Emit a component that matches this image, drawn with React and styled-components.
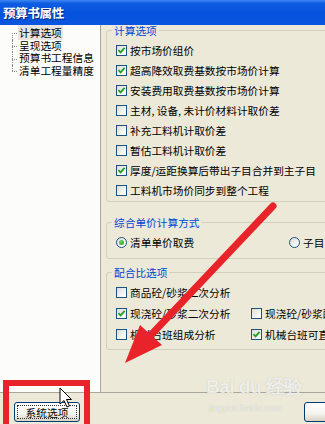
import React from "react";
import styled, { createGlobalStyle } from "styled-components";

const GlobalStyle = createGlobalStyle`
  html, body {
    margin: 0;
    padding: 0;
    background: #ece9d8;
  }
`;

const FONT = `"Noto Sans CJK SC", "Noto Sans", "Liberation Sans", sans-serif`;

const Window = styled.div`
  position: relative;
  width: 325px;
  height: 424px;
  overflow: hidden;
  display: flex;
  flex-direction: column;
  background: #ece9d8;
  font-family: ${FONT};
  font-size: 10.7px;
  color: #000;
`;

const TitleBar = styled.div`
  height: 25px;
  flex-shrink: 0;
  display: flex;
  align-items: center;
  padding-left: 3px;
  background: linear-gradient(#3d86f2 0%, #0d5ce2 14%, #0552dc 55%, #0a56e0 100%);
  color: #fff;
  font-size: 12.5px;
  font-weight: bold;
  letter-spacing: -0.3px;
  text-shadow: 1px 1px 0 #0a2a80;
  position: relative;
  z-index: 2;
`;

const Body = styled.div`
  flex: 1;
  display: flex;
  min-height: 0;
`;

const Tree = styled.ul`
  width: 100px;
  flex-shrink: 0;
  margin: 0;
  padding: 2px 0 0 0;
  list-style: none;
  background: #fcfcfa;
  border-right: 1px solid #a7a69b;
`;

const TreeItem = styled.li`
  position: relative;
  height: 12.7px;
  line-height: 12.7px;
  padding-left: 18px;
  white-space: nowrap;

  &::before {
    content: "";
    position: absolute;
    left: 12px;
    top: ${(p) => (p.$first ? "50%" : "0")};
    bottom: ${(p) => (p.$last ? "50%" : "0")};
    border-left: 1px dotted #8a8a8a;
  }

  &::after {
    content: "";
    position: absolute;
    left: 12px;
    top: 50%;
    width: 5px;
    border-top: 1px dotted #8a8a8a;
  }
`;

const TreeLabel = styled.span`
  padding: 0 1px;
  background: ${(p) => (p.$selected ? "#e6e5df" : "transparent")};
`;

const Panel = styled.div`
  flex: 1;
  min-width: 0;
  overflow: hidden;
  padding-left: 5px;
  margin-top: -0.5px;
`;

const Group = styled.fieldset`
  width: 250px;
  min-width: 0;
  margin: ${(p) => p.$gap || 0}px 0 0 0;
  padding: 0;
  border: 1px solid #d0d0bf;
  border-radius: 3px;
`;

const Legend = styled.legend`
  margin-left: 5px;
  padding: 0 2px;
  line-height: 11px;
  color: #0046d5;
`;

const Rows = styled.div`
  padding: ${(p) => p.$pt || 5}px 0 ${(p) => p.$pb || 0}px 9px;
`;

const Row = styled.div`
  display: flex;
  height: ${(p) => p.$h || 20}px;
  align-items: center;
`;

const Option = styled.label`
  display: flex;
  align-items: center;
  gap: 3px;
  white-space: nowrap;
  flex-shrink: 0;
  width: ${(p) => (p.$w ? `${p.$w}px` : "auto")};
`;

const Box = styled.span`
  width: 11px;
  height: 11px;
  box-sizing: border-box;
  flex-shrink: 0;
  border: 1px solid #1c5180;
  border-radius: ${(p) => (p.$round ? "50%" : "0")};
  background: linear-gradient(135deg, #dcdcd4 0%, #f4f4f0 60%, #fff 100%);
  display: flex;
  align-items: center;
  justify-content: center;
`;

const Dot = styled.span`
  width: 5px;
  height: 5px;
  border-radius: 50%;
  background: radial-gradient(circle at 35% 35%, #6fd46f, #1f9a1f);
`;

const Footer = styled.div`
  height: 32px;
  flex-shrink: 0;
  box-sizing: border-box;
  border-top: 1px solid #a7a69b;
  display: flex;
  align-items: flex-start;
  padding: 9px 0 0 14px;
`;

const Button = styled.button`
  flex-shrink: 0;
  width: ${(p) => p.$w}px;
  height: 20px;
  margin: 0 0 0 ${(p) => p.$ml || 0}px;
  padding: 0;
  border: 1px solid #003c74;
  border-radius: 3px;
  background: linear-gradient(#ffffff 0%, #f4f3ee 60%, #d8d2c4 100%);
  font-family: ${FONT};
  font-size: 10.7px;
  color: #000;
  outline: ${(p) => (p.$focus ? "1px dotted #333" : "none")};
  outline-offset: -4px;
`;

const Overlay = styled.svg`
  position: absolute;
  left: 0;
  top: 0;
  pointer-events: none;
  z-index: 5;
`;

const Watermark = styled.div`
  position: absolute;
  left: 206px;
  top: 376px;
  color: rgba(255, 255, 255, 0.75);
  font-family: "Liberation Sans", sans-serif;
  text-shadow: 0 0 1px rgba(150, 150, 140, 0.6);
  pointer-events: none;
  z-index: 4;
`;

const MarkLogo = styled.div`
  font-size: 19px;
  font-weight: bold;
  line-height: 22px;
  letter-spacing: -0.5px;
`;

const MarkSub = styled.div`
  font-size: 9px;
  line-height: 12px;
  margin-top: 4px;
  padding-left: 3px;
`;

const Check = () => (
  <svg width="9" height="9" viewBox="0 0 9 9">
    <path d="M1.5 4.2 L3.6 6.4 L7.6 1.8" fill="none" stroke="#21a121" strokeWidth="1.8" />
  </svg>
);

const CheckOption = ({ checked, w, children }) => (
  <Option $w={w}>
    <Box>{checked && <Check />}</Box>
    {children}
  </Option>
);

const RadioOption = ({ checked, w, children }) => (
  <Option $w={w}>
    <Box $round>{checked && <Dot />}</Box>
    {children}
  </Option>
);

const treeItems = ["计算选项", "呈现选项", "预算书工程信息", "清单工程量精度"];

const calcOptions = [
  ["按市场价组价", true],
  ["超高降效取费基数按市场价计算", true],
  ["安装费用取费基数按市场价计算", true],
  ["主材, 设备, 未计价材料计取价差", false],
  ["补充工料机计取价差", false],
  ["暂估工料机计取价差", false],
  ["厚度/运距换算后带出子目合并到主子目", true],
  ["工料机市场价同步到整个工程", false],
];

export default function App() {
  return (
    <>
      <GlobalStyle />
      <Window>
        <TitleBar>预算书属性</TitleBar>
        <Body>
          <Tree>
            {treeItems.map((t, i) => (
              <TreeItem key={t} $first={i === 0} $last={i === treeItems.length - 1}>
                <TreeLabel $selected={i === 0}>{t}</TreeLabel>
              </TreeItem>
            ))}
          </Tree>
          <Panel>
            <Group>
              <Legend>计算选项</Legend>
              <Rows $pt={5}>
                {calcOptions.map(([t, c]) => (
                  <Row key={t}>
                    <CheckOption checked={c}>{t}</CheckOption>
                  </Row>
                ))}
              </Rows>
            </Group>
            <Group $gap={15}>
              <Legend>综合单价计算方式</Legend>
              <Rows $pt={4.5} $pb={6}>
                <Row>
                  <RadioOption checked w={173}>清单单价取费</RadioOption>
                  <RadioOption>子目单价取费</RadioOption>
                </Row>
              </Rows>
            </Group>
            <Group $gap={7.5}>
              <Legend>配合比选项</Legend>
              <Rows $pt={4.5} $pb={4}>
                <Row $h={21}>
                  <CheckOption>商品砼/砂浆二次分析</CheckOption>
                </Row>
                <Row $h={21}>
                  <CheckOption checked w={135}>现浇砼/砂浆二次分析</CheckOption>
                  <CheckOption>现浇砼/砂浆配合比</CheckOption>
                </Row>
                <Row $h={21}>
                  <CheckOption w={135}>机械台班组成分析</CheckOption>
                  <CheckOption checked>机械台班可直接修改</CheckOption>
                </Row>
              </Rows>
            </Group>
          </Panel>
        </Body>
        <Footer>
          <Button $w={66} $focus>系统选项</Button>
          <Button $w={70} $ml={224}>确定</Button>
        </Footer>

        <Watermark>
          <MarkLogo>Bai du 经验</MarkLogo>
          <MarkSub>jingyan.baidu.com</MarkSub>
        </Watermark>

        <Overlay width="325" height="424" viewBox="0 0 325 424">
          <rect x="6" y="383" width="81" height="52" fill="none" stroke="#e8242a" strokeWidth="6" />
          <line x1="273" y1="206" x2="150" y2="336" stroke="#e8242a" strokeWidth="7" strokeLinecap="round" />
          <polygon points="125,363 162,345 140,325" fill="#e8242a" />
          <path
            d="M60 388 L60 404 L64 400.5 L67 407 L69.5 406 L66.5 399.5 L71.5 399.5 Z"
            fill="#fff"
            stroke="#000"
            strokeWidth="1"
            strokeLinejoin="round"
          />
        </Overlay>
      </Window>
    </>
  );
}
